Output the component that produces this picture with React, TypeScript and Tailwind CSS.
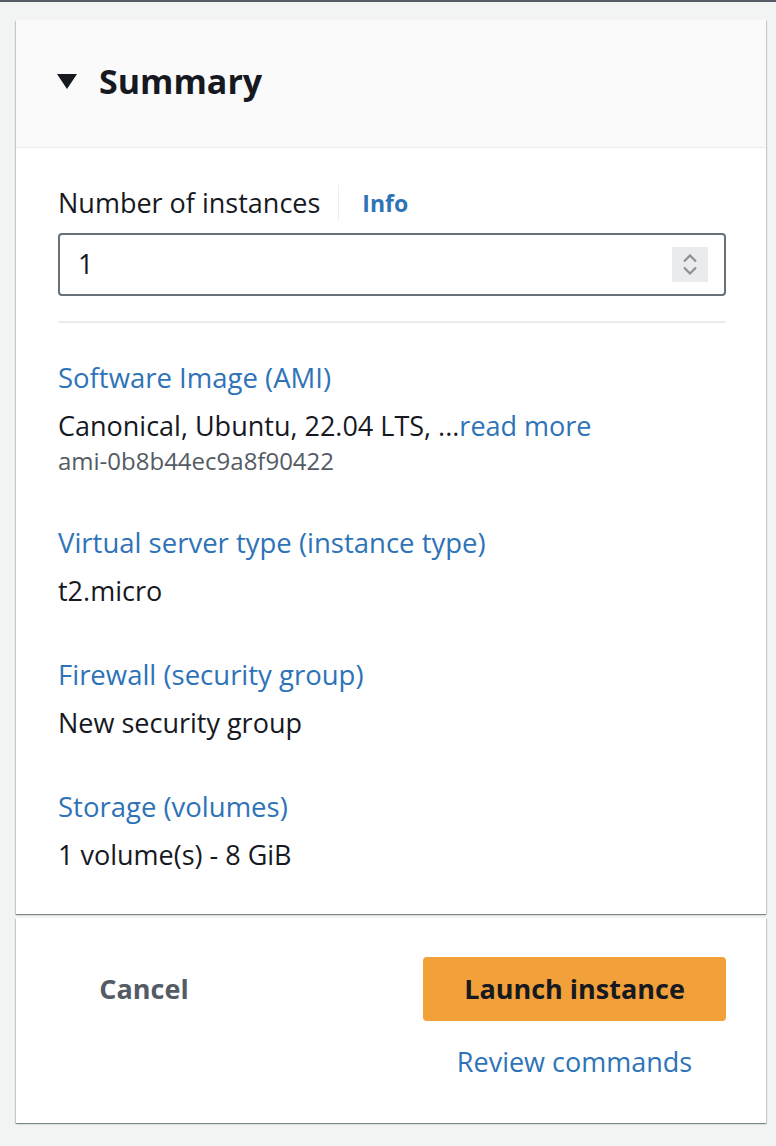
import React from 'react'

const font = { fontFamily: '"Open Sans", "Noto Sans", Arial, sans-serif' }

function Field({ label, children }: { label: string; children: React.ReactNode }) {
  return (
    <div className="flex flex-col">
      <div className="text-[27.5px] leading-[36px] text-[#2e73b8]">{label}</div>
      <div className="mt-[12px]">{children}</div>
    </div>
  )
}

export default function App() {
  return (
    <div className="min-h-[1146px] bg-[#f2f3f3]" style={font}>
      <div className="h-[2px] bg-[#545b64]" />
      <div className="ml-4 mr-[10px] mt-[18px] flex flex-col gap-[4px]">
        {/* Summary card */}
        <div className="bg-white shadow-[0_1px_1px_0_rgba(0,28,36,0.3),1px_1px_1px_0_rgba(0,28,36,0.15),-1px_1px_1px_0_rgba(0,28,36,0.15)]">
          <div className="h-[128px] bg-[#fafafa] border-b border-[#eaeded] flex items-center pl-[41px] gap-[22px] pb-[6px]">
            <svg width="20" height="15" viewBox="0 0 20 15" className="mt-[2px]">
              <path d="M0 0 H20 L10 15 Z" fill="#16191f" />
            </svg>
            <span className="text-[34px] font-bold text-[#16191f] leading-none">Summary</span>
          </div>

          <div className="pl-[42px] pr-[40px] pt-[37px] pb-[41px]">
            <div className="flex items-center h-[36px]">
              <span className="text-[27px] text-[#16191f]">Number of instances</span>
              <span className="ml-[18px] h-[36px] border-l border-[#eaeded]" />
              <span className="ml-[23px] text-[23px] font-bold text-[#2e73b8]">Info</span>
            </div>
            <div className="mt-[12px] h-[63px] border-2 border-[#687078] rounded-[4px] flex items-center pl-[18px] pr-[16px]">
              <span className="flex-1 text-[27px] text-[#16191f]">1</span>
              <div className="w-[36px] h-[35px] bg-[#e9ebed] flex flex-col items-center justify-center gap-[3px]">
                <svg width="16" height="9" viewBox="0 0 16 9">
                  <path d="M2 7.5 L8 1.5 L14 7.5" fill="none" stroke="#879196" strokeWidth="2.2" />
                </svg>
                <svg width="16" height="9" viewBox="0 0 16 9">
                  <path d="M2 1.5 L8 7.5 L14 1.5" fill="none" stroke="#879196" strokeWidth="2.2" />
                </svg>
              </div>
            </div>
            <div className="mt-[25px] border-t-2 border-[#eaeded]" />

            <div className="mt-[37px] flex flex-col gap-[48px]">
              <Field label="Software Image (AMI)">
                <div className="text-[27px] leading-[36px] text-[#16191f]">
                  Canonical, Ubuntu, 22.04 LTS, ...<span className="text-[#2e73b8]">read more</span>
                </div>
                <div className="text-[24px] leading-[32px] text-[#545b64] mt-[1px]">ami-0b8b44ec9a8f90422</div>
              </Field>
              <Field label="Virtual server type (instance type)">
                <div className="text-[27px] leading-[36px] text-[#16191f]">t2.micro</div>
              </Field>
              <Field label="Firewall (security group)">
                <div className="text-[27px] leading-[36px] text-[#16191f]">New security group</div>
              </Field>
              <Field label="Storage (volumes)">
                <div className="text-[27px] leading-[36px] text-[#16191f]">1 volume(s) - 8 GiB</div>
              </Field>
            </div>
          </div>
        </div>

        {/* Footer card */}
        <div className="bg-white pl-[42px] pr-[40px] pt-[39px] pb-[43px] flex items-start justify-between shadow-[0_1px_1px_0_rgba(0,28,36,0.3),1px_1px_1px_0_rgba(0,28,36,0.15),-1px_1px_1px_0_rgba(0,28,36,0.15)]">
          <button className="w-[172px] h-[64px] text-[27px] font-bold text-[#545b64]">Cancel</button>
          <div className="w-[303px] flex flex-col items-center">
            <button className="w-full h-[64px] rounded-[4px] bg-[#f2a03a] text-[27px] font-bold text-[#16191f]">
              Launch instance
            </button>
            <span className="mt-[23px] text-[27px] leading-[36px] text-[#2e73b8]">Review commands</span>
          </div>
        </div>
      </div>
    </div>
  )
}
